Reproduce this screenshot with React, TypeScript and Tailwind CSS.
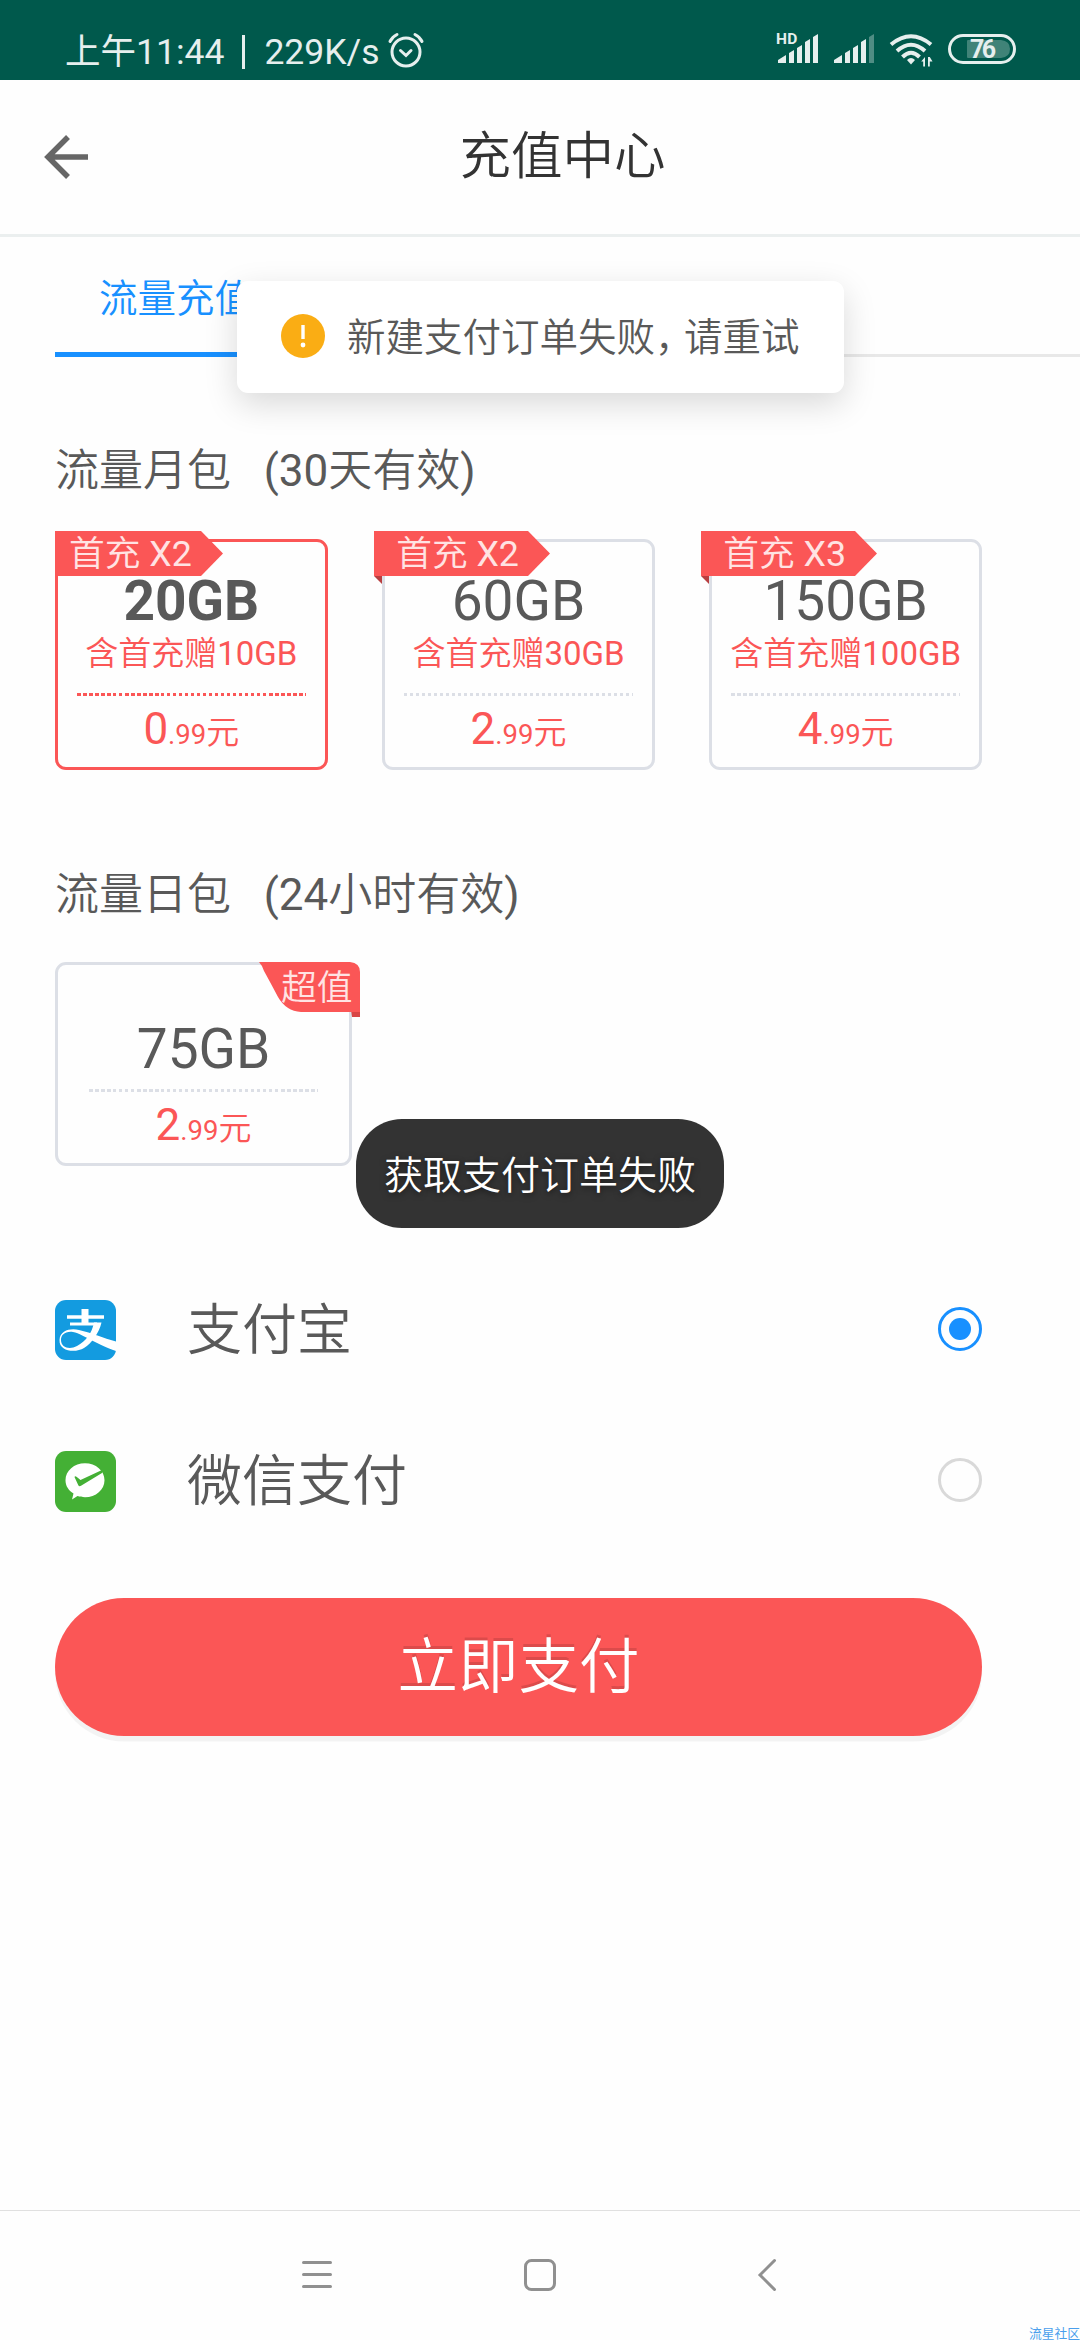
import type { ReactNode } from "react";

type Plan = {
  size: string;
  bonus: string;
  price: string;
  cents: string;
  badge: string;
  active?: boolean;
};

const monthly: Plan[] = [
  { size: "20GB", bonus: "10GB", price: "0", cents: ".99", badge: "X2", active: true },
  { size: "60GB", bonus: "30GB", price: "2", cents: ".99", badge: "X2" },
  { size: "150GB", bonus: "100GB", price: "4", cents: ".99", badge: "X3" },
];

// Latin and digits keep their own weight next to the thinner CJK text
function Num({ children }: { children: ReactNode }) {
  return <span className="font-[370]">{children}</span>;
}

function StatusBar() {
  return (
    <div className="flex h-20 items-start bg-[#00594c] pl-[65px] text-[#e6efee]">
      <div className="mt-[32px] flex h-10 items-center text-[35.5px] leading-10 font-[370]">
        <span className="whitespace-pre">上午11:44</span>
        <span className="ml-[18px] h-[34px] w-[3px] bg-[#e6efee]" />
        <span className="ml-[19px]">229K/s</span>
      </div>
      <svg className="mt-[31px] ml-[8px]" width="36" height="38" viewBox="0 0 36 38" fill="none" stroke="currentColor" strokeWidth="3" strokeLinecap="round">
        <circle cx="18" cy="21" r="14" />
        <path d="M12.5 19.5l5.5 5 5-5" />
        <path d="M2 10.5c1.500-3.200 3.500-5.200 7-7M34 10.500c-1.500-3.200-3.500-5.200-7-7" />
      </svg>
      <svg className="mt-[30px] ml-auto mr-[64px]" width="242" height="40" viewBox="774 30 242 40" fill="currentColor">
        <text x="776" y="44" fontSize="15.500" fontWeight="700" letterSpacing="0.3">HD</text>
        <path d="M778 63v-3l8-5v8zM789 63V53l5-3v13zM797 63V48l5-3v18zM805 63V42l5-3v24zM813 63V37l5-3v29z" />
        <path d="M834 63v-3l8-5v8zM845 63V53l5-3v13zM853 63V48l5-3v18zM861 63V42l5-3v24z" />
        <path d="M869 63V37l5-3v29z" opacity="0.35" />
        <g fill="none" stroke="currentColor" strokeWidth="4">
          <path d="M891 44.500Q911 28 931 44.500" />
          <path d="M897 51Q911 38.500 925 51" />
          <path d="M902.500 57Q911 48.500 919.500 57" />
        </g>
        <path d="M907 60q4-4 8 0l-4 4.500z" />
        <path d="M925 57v9.500h-1.800v-5h-2l3.800-4.500zM928 66.500V57h1.800l2.700 4.500h-2.700v5z" />
        <rect x="949.500" y="35.500" width="65" height="27" rx="13.500" fill="none" stroke="currentColor" strokeWidth="3" />
        <path d="M968 40h33q9 1 9 9t-9 9h-33q-1 0-1-1V41q0-1 1-1z" opacity="0.28" />
        <text x="970" y="58" fontSize="25" fontWeight="700" letterSpacing="-2.500">76</text>
      </svg>
    </div>
  );
}

function Header() {
  return (
    <header className="relative flex h-[157px] items-center justify-center border-b-[3px] border-[#ebefef] pl-[45px]">
      <svg className="absolute top-[55px] left-[44px]" width="44" height="44" viewBox="0 0 44 44" fill="none" stroke="#666" strokeWidth="5.500">
        <path d="M44 22H4M24 2L4 22l20 20" />
      </svg>
      <h1 className="text-[51.5px] leading-[60px] text-[#333]">充值中心</h1>
    </header>
  );
}

function RibbonLeft({ label }: { label: string }) {
  return (
    <div className="absolute -top-[11px] -left-[11px] h-[53px] w-[176px]">
      <svg className="absolute inset-0" width="176" height="53" viewBox="0 0 176 53">
        <path d="M0 45h8v8z" fill="#b83f40" />
        <path d="M0 0h154l22 22.500L154 45H0z" fill="#fb5656" />
      </svg>
      <div className="relative pl-[22px] text-[35.75px] leading-[46px] text-[#ffe3e3]">
        首充 <Num>{label}</Num>
      </div>
    </div>
  );
}

function RibbonRight() {
  return (
    <div className="absolute -top-[3px] -right-[11px] h-[55px] w-[101px]">
      <svg className="absolute inset-0" width="101" height="55" viewBox="0 0 101 55">
        <path d="M92 48h9v7h-8z" fill="#d84545" />
        <path d="M0 0h91q10 1 10 10v40H42q-15-1-23-15Q10 18 5 9 3 3 0 0z" fill="#fb5656" />
      </svg>
      <div className="relative pl-[22px] text-[35.75px] leading-[53px] text-[#ffe3e3]">超值</div>
    </div>
  );
}

function Dots({ active }: { active?: boolean }) {
  return (
    <div
      className={
        active
          ? "h-[3px] w-[229px] bg-[repeating-linear-gradient(90deg,#fb5656_0_3.5px,transparent_3.5px_6px)]"
          : "h-[3px] w-[229px] bg-[repeating-linear-gradient(90deg,#dcdfe6_0_3.5px,transparent_3.5px_6px)]"
      }
    />
  );
}

function Price({ price, cents }: { price: string; cents: string }) {
  return (
    <div className="mt-2 h-[50px] text-[44px] leading-[50px] text-[#fb5656]">
      <Num>{price}</Num>
      <span className="text-[27.5px] leading-none font-[370]">{cents}</span>
      <span className="text-[33px] leading-none">元</span>
    </div>
  );
}

function PlanCard({ plan }: { plan: Plan }) {
  return (
    <div
      className={`relative flex h-[231px] flex-col items-center rounded-[11px] border-[3px] ${
        plan.active ? "border-[#fb5656]" : "border-[#dcdfe6]"
      }`}
    >
      <RibbonLeft label={plan.badge} />
      <div className={`mt-9 text-[55px] leading-[46px] ${plan.active ? "font-bold" : "font-[370]"}`}>{plan.size}</div>
      <div className="mt-2.5 mb-[19px] text-[33px] leading-10 whitespace-nowrap text-[#fb5656]">
        含首充赠<Num>{plan.bonus}</Num>
      </div>
      <Dots active={plan.active} />
      <Price price={plan.price} cents={plan.cents} />
    </div>
  );
}

function AlipayIcon() {
  return (
    <svg width="61" height="60" viewBox="0 0 61 60" fill="none" stroke="#fff">
      <rect width="61" height="60" rx="11" fill="#139be0" stroke="none" />
      <path d="M12 17h37" strokeWidth="3.500" />
      <path d="M30 9v14" strokeWidth="7" />
      <path d="M15 24h27" strokeWidth="3" />
      <path d="M39 22.500h7.500C44 33 37 43 29 48 21 53 4 52 4.500 40 5 30 16 28 24 30c13 3 24 8 37 11.500V51C51 48 45 44 38 41 30 37 24 33 18 32 10 31 6 35 6 40c0 8 9 10 16 6C31 41 37 33 39 22.500z" fill="#fff" stroke="none" />
    </svg>
  );
}

function WechatIcon() {
  return (
    <svg width="61" height="61" viewBox="0 0 61 61">
      <rect width="61" height="61" rx="11" fill="#44b035" />
      <path d="M30 12.300c10.800 0 19.500 7.500 19.500 17s-8.700 17-19.500 17c-2.800 0-5-.4-7.500-1.200L17 48.500l1.500-6C13.500 39.500 10.500 35 10.500 29.300c0-9.500 8.700-17 19.500-17z" fill="#fff" />
      <path d="M19.500 26q.5-1.200 2-.2l4 3.200L47 19v3L26 34.800q-1.800 1.200-2.700-.6z" fill="#44b035" />
    </svg>
  );
}

function PayRow({ icon, label, checked }: { icon: ReactNode; label: string; checked?: boolean }) {
  return (
    <div className="flex h-[61px] items-start">
      {icon}
      <span className="ml-[71px] text-[55px] leading-[61px]">{label}</span>
      <span
        className={`mt-[7px] ml-auto flex size-11 items-center justify-center rounded-full border-[3px] ${
          checked ? "border-[#1890ff]" : "border-[#d9d9d9]"
        }`}
      >
        {checked && <span className="size-[22px] rounded-full bg-[#1890ff]" />}
      </span>
    </div>
  );
}

function Message() {
  return (
    <div className="absolute top-[281px] left-[237px] flex h-28 w-[607px] items-center rounded-[11px] bg-white pl-11 shadow-[0_11px_33px_rgba(0,0,0,0.15)]">
      <svg className="-mt-0.5" width="44" height="44" viewBox="0 0 44 44" fill="#fff">
        <circle cx="22" cy="22" r="22" fill="#faad14" />
        <path d="M20.300 11h3.400v14h-3.400z" />
        <circle cx="22" cy="31" r="2.400" />
      </svg>
      <span className="ml-[22px] pt-0.5 text-[38.5px] leading-[60px] whitespace-nowrap">
        新建支付订单失败<span className="tracking-[-9.5px]">，</span>请重试
      </span>
    </div>
  );
}

function NavBar() {
  return (
    <nav className="relative mt-auto h-[130px] border-t border-[#e0e0e0]">
      <svg width="1080" height="129" viewBox="0 2211 1080 129" fill="none" stroke="#909090" strokeWidth="3" strokeLinecap="round">
        <path d="M303.500 2262.500h27M303.500 2274.500h27M303.500 2286.500h27" />
        <rect x="525.500" y="2260.500" width="29" height="29" rx="6" />
        <path d="M774.500 2260.500L760 2275l14.500 14.500" />
      </svg>
      <span className="absolute right-0 bottom-0 h-[13px] text-[12.75px] leading-[14px] font-normal text-[#4a9eec]">流星社区</span>
    </nav>
  );
}

export default function App() {
  return (
    <div className="relative flex h-[2340px] w-[1080px] flex-col overflow-hidden bg-[#fefefe] font-[Roboto,'Noto_Sans_CJK_SC',sans-serif] font-[350] text-[#595959]">
      <StatusBar />
      <Header />

      <div className="ml-[55px] flex h-[120px] border-b-[3px] border-[#e8e8e8]">
        <div className="-mb-[3px] border-b-[5px] border-[#1890ff] px-11 pt-8 text-[38.5px] leading-[60px] text-[#1890ff]">
          流量充值
        </div>
      </div>

      <main className="ml-[55px] w-[927px]">
        <h2 className="mt-[84px] text-[44px] leading-[60px] whitespace-pre">
          流量月包<Num>{"   (30"}</Num>天有效<Num>)</Num>
        </h2>
        {/* the first ribbon is cut at the left edge of the list */}
        <div className="mt-[38px] grid grid-cols-3 gap-[54.5px] [clip-path:inset(-10px_0)]">
          {monthly.map((plan) => (
            <PlanCard key={plan.size} plan={plan} />
          ))}
        </div>

        <h2 className="mt-[95px] text-[44px] leading-[60px] whitespace-pre">
          流量日包<Num>{"   (24"}</Num>小时有效<Num>)</Num>
        </h2>
        <div className="relative mt-[37px] flex h-[204px] w-[297px] flex-col items-center rounded-[11px] border-[3px] border-[#dcdfe6]">
          <RibbonRight />
          <div className="mt-[57px] mb-[13px] text-[55px] leading-[54px] font-[370]">75GB</div>
          <Dots />
          <Price price="2" cents=".99" />
        </div>

        <div className="mt-[134px] flex flex-col gap-[90px]">
          <PayRow icon={<AlipayIcon />} label="支付宝" checked />
          <PayRow icon={<WechatIcon />} label="微信支付" />
        </div>

        <button className="mt-[86px] block h-[138px] w-full rounded-full bg-[#fb5656] text-[60.5px] leading-[137px] text-white shadow-[0_5.5px_0_rgba(0,0,0,0.045)] [text-shadow:0_-3px_0_rgba(0,0,0,0.12)]">
          立即支付
        </button>
      </main>

      <NavBar />

      <Message />
      <div className="absolute top-[1119px] left-[356px] flex h-[109px] w-[368px] items-center justify-center rounded-[46px] bg-[#333] pt-1 text-[39px] leading-[60px] text-white [text-shadow:0_2px_6px_rgba(0,0,0,0.5)]">
        获取支付订单失败
      </div>
    </div>
  );
}
